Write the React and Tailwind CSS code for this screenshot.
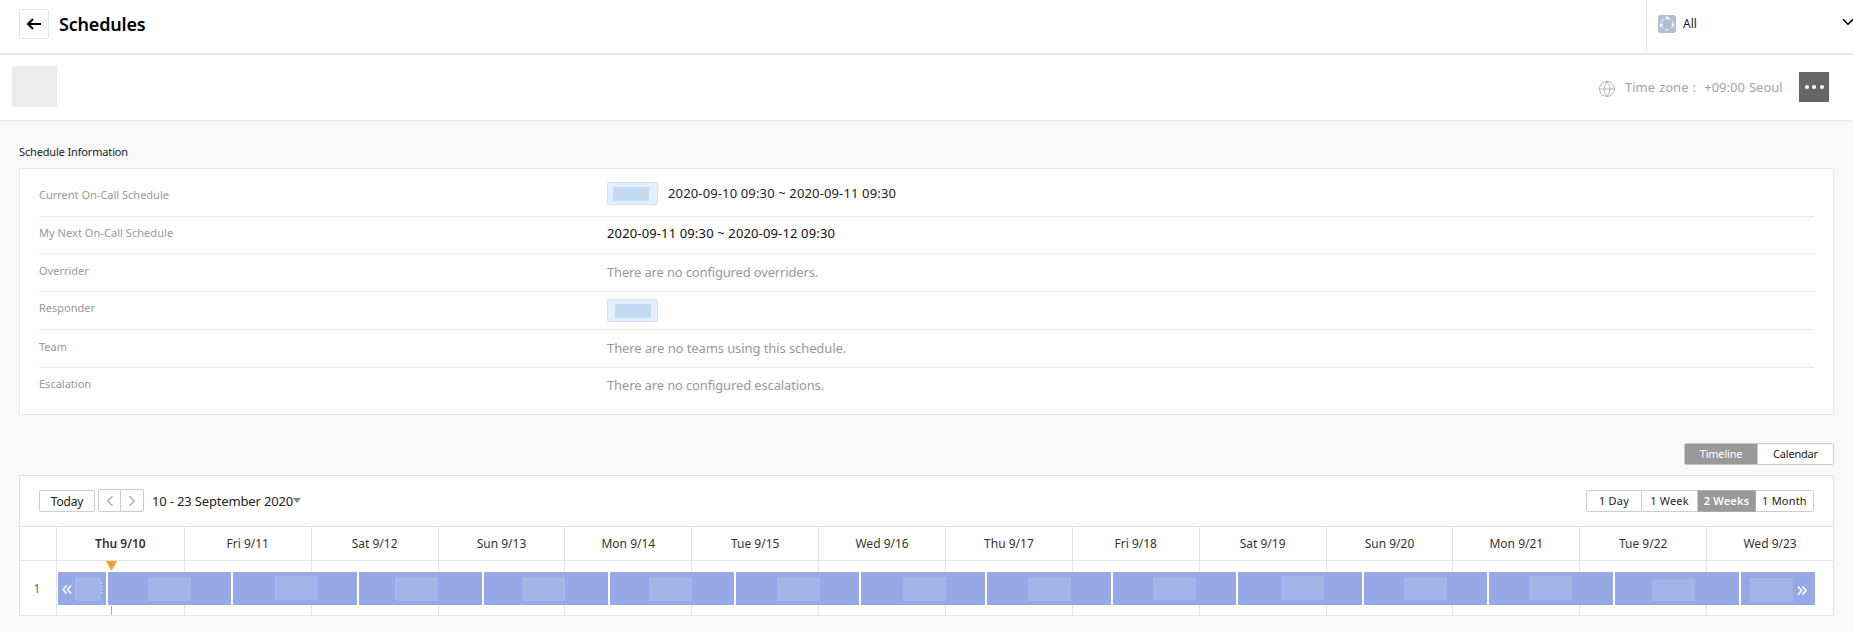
import React from "react";
import { ChevronDown, ChevronLeft, ChevronRight, Globe } from "lucide-react";

const days = ["Thu 9/10","Fri 9/11","Sat 9/12","Sun 9/13","Mon 9/14","Tue 9/15","Wed 9/16","Thu 9/17","Fri 9/18","Sat 9/19","Sun 9/20","Mon 9/21","Tue 9/22","Wed 9/23"];

const segs = [
  [58,106,75,101,577,601],
  [108,231,148,191,577,601],
  [233,357,275,318,576,600],
  [359,482,395,438,577,601],
  [484,608,522,565,577,601],
  [610,734,649,692,577,601],
  [736,859,777,820,577,601],
  [861,985,903,946,577,601],
  [987,1111,1028,1071,577,601],
  [1113,1236,1153,1196,577,600],
  [1238,1362,1281,1324,576,600],
  [1364,1487,1404,1447,577,600],
  [1489,1613,1529,1572,576,600],
  [1615,1739,1652,1695,579,601],
  [1741,1815,1750,1793,578,602],
];

function Row({ label, children, last }) {
  return (
    <div className={`flex ${last ? "h-[46px]" : "border-b border-[#ececec]"} mx-[19px]`}>
      <div className="w-[568px] shrink-0 text-[11px] text-[#999]">{label}</div>
      <div className="flex-1 text-[13px]">{children}</div>
    </div>
  );
}

function Badge({ inner }) {
  return (
    <div className="w-[51px] h-[23px] bg-[#e3f0fd] border border-[#cfe4fa] rounded-[2px] flex items-center">
      <div className={`${inner} w-[36px] h-[14px] bg-[#c5dbf4]`} />
    </div>
  );
}

export default function App() {
  return (
    <div className="w-[1853px] h-[632px] overflow-hidden bg-[#f9f9f9] text-[#222]" style={{ fontFamily: '"Noto Sans","Noto Sans CJK KR",sans-serif' }}>
      {/* top bar */}
      <header className="h-[55px] bg-white border-b-2 border-[#e9e9e9] flex items-center">
        <div className="flex items-center pb-[5px]">
          <button className="ml-[19px] w-[30px] h-[30px] border border-[#e6e6e6] rounded-[2px] flex items-center justify-center">
            <svg width="16" height="12" viewBox="0 0 16 12" fill="none" stroke="#000" strokeWidth="2">
              <path d="M15 6H2" />
              <path d="M7 1 2 6l5 5" />
            </svg>
          </button>
          <h1 className="ml-[10px] text-[18px] font-semibold text-black tracking-[-0.2px]">Schedules</h1>
        </div>
        <div className="ml-auto w-[207px] h-full border-l border-[#e8e8e8] flex items-center pl-[11px] pb-[5px] relative overflow-hidden">
          <svg width="18" height="18" viewBox="0 0 18 18">
            <rect width="18" height="18" rx="2" fill="#b1bfd2" />
            <circle cx="9" cy="9" r="6" fill="none" stroke="#fff" strokeWidth="1" strokeDasharray="4.5 2.2" />
            <circle cx="9" cy="3" r="1.5" fill="#fff" />
            <circle cx="3" cy="10" r="1.5" fill="#fff" />
            <circle cx="15" cy="10" r="1.5" fill="#fff" />
          </svg>
          <span className="ml-[7px] text-[12px] text-[#222]">All</span>
          <ChevronDown size={18} strokeWidth={2.2} className="absolute right-[-4px] top-[13px] text-black" />
        </div>
      </header>

      {/* sub bar */}
      <div className="h-[66px] bg-white border-b border-[#e8e8e8] flex items-center pl-[12px] pr-[24px]">
        <div className="w-[45px] h-[41px] bg-[#ececec] -mt-[2px]" />
        <Globe size={18} strokeWidth={1.1} className="ml-auto text-[#a8a8a8] mt-[2px]" />
        <span className="ml-[9px] w-[157px] text-[13px] text-[#a3a3a3] [word-spacing:0.7px] whitespace-pre mt-[1px]">Time zone :  +09:00 Seoul</span>
        <button className="ml-[17px] w-[30px] h-[30px] bg-[#666] flex items-center justify-center gap-[3.5px] -mt-[1px]">
          <span className="w-[4px] h-[4px] rounded-full bg-white" />
          <span className="w-[4px] h-[4px] rounded-full bg-white" />
          <span className="w-[4px] h-[4px] rounded-full bg-white" />
        </button>
      </div>

      <main className="px-[19px]">
        <div className="h-[47px] pt-[23px] text-[11px] leading-[16px] text-[#222] tracking-[-0.15px]">Schedule Information</div>

        {/* info card */}
        <section className="h-[247px] bg-white border border-[#e8e8e8]">
          <Row label={<div className="pt-[18px] leading-[16px]">Current On-Call Schedule</div>}>
            <div className="h-[47px] pt-[13px] flex items-start">
              <Badge inner="ml-[5px]" />
              <span className="ml-[10px] leading-[22px] text-[#222] tracking-[0.14px]">2020-09-10 09:30 ~ 2020-09-11 09:30</span>
            </div>
          </Row>
          <Row label={<div className="pt-[8px] leading-[16px] tracking-[0.05px]">My Next On-Call Schedule</div>}>
            <div className="h-[36px] pt-[5px] leading-[22px] text-[#111] tracking-[0.14px]">2020-09-11 09:30 ~ 2020-09-12 09:30</div>
          </Row>
          <Row label={<div className="pt-[9px] leading-[16px]">Overrider</div>}>
            <div className="h-[37px] pt-[7px] leading-[22px] text-[#999] tracking-[-0.16px]">There are no configured overriders.</div>
          </Row>
          <Row label={<div className="pt-[8px] leading-[16px]">Responder</div>}>
            <div className="h-[37px] pt-[7px]"><Badge inner="ml-[7px]" /></div>
          </Row>
          <Row label={<div className="pt-[9px] leading-[16px]">Team</div>}>
            <div className="h-[37px] pt-[7px] leading-[22px] text-[#999] tracking-[-0.09px]">There are no teams using this schedule.</div>
          </Row>
          <Row last label={<div className="pt-[8px] leading-[16px]">Escalation</div>}>
            <div className="pt-[6px] leading-[22px] text-[#999] tracking-[-0.14px]">There are no configured escalations.</div>
          </Row>
        </section>

        {/* view toggle */}
        <div className="mt-[28px] flex justify-end text-[11px] tracking-[-0.2px]">
          <button className="w-[74px] h-[22px] bg-[#999] border border-[#c8c8c8] text-white rounded-l-[2px]">Timeline</button>
          <button className="w-[76px] h-[22px] bg-white border border-l-0 border-[#ccc] text-[#222] rounded-r-[2px]">Calendar</button>
        </div>

        {/* timeline card */}
        <section className="mt-[10px] h-[141px] bg-white border border-[#e3e3e3]">
          <div className="h-[51px] border-b border-[#e3e3e3] flex items-start pl-[19px] pr-[19px] pt-[13px]">
            <button className="w-[56px] h-[22px] mt-[1px] pt-[2px] border border-[#ccc] rounded-[2px] text-[12px] text-[#222] tracking-[-0.2px]">Today</button>
            <button className="ml-[3px] w-[23px] h-[23px] border border-[#ccc] rounded-l-[2px] flex items-center justify-center">
              <ChevronLeft size={18} strokeWidth={1.6} className="text-[#aaa]" />
            </button>
            <button className="w-[23px] h-[23px] border border-l-0 border-[#ccc] rounded-r-[2px] flex items-center justify-center">
              <ChevronRight size={18} strokeWidth={1.6} className="text-[#aaa]" />
            </button>
            <span className="ml-[8px] mt-[1px] text-[13px] leading-[22px] text-[#222] tracking-[-0.16px]">10 - 23 September 2020</span>
            <svg width="8" height="5" viewBox="0 0 8 5" className="mt-[9px]"><path d="M0 0h8L4 5z" fill="#888" /></svg>
            <div className="ml-auto flex text-[11px] tracking-[0.2px] mt-[1px]">
              <button className="w-[56px] h-[22px] border border-[#ccc] rounded-l-[2px] text-[#222]">1 Day</button>
              <button className="w-[56px] h-[22px] border border-l-0 border-[#ccc] text-[#222]">1 Week</button>
              <button className="w-[58px] h-[22px] bg-[#999] border border-l-0 border-[#aaa] text-white font-semibold">2 Weeks</button>
              <button className="w-[58px] h-[22px] border border-l-0 border-[#ccc] rounded-r-[2px] text-[#222]">1 Month</button>
            </div>
          </div>

          <div className="flex h-[34px] border-b border-[#e3e3e3]">
            <div className="w-[37px] shrink-0 border-r border-[#e3e3e3]" />
            <div className="flex-1 grid grid-cols-[repeat(14,1fr)]">
              {days.map((d, i) => (
                <div key={d} className={`flex items-center justify-center text-[12px] text-[#333] ${i > 0 ? "border-l border-[#e3e3e3]" : ""} ${i === 0 ? "font-semibold text-[#222]" : ""}`}>{d}</div>
              ))}
            </div>
          </div>

          <div className="flex h-[54px] relative">
            <div className="w-[37px] shrink-0 border-r border-[#e3e3e3] flex items-center justify-center text-[12px] text-[#666] pt-[2px] pr-[2px]">1</div>
            <div className="flex-1 grid grid-cols-[repeat(14,1fr)]">
              {days.map((d, i) => (
                <div key={d} className={i > 0 ? "border-l border-[#e3e3e3]" : ""} />
              ))}
            </div>

            {/* bars */}
            <div className="absolute left-[38px] top-[11px] h-[33px] flex">
              {segs.map(([x0, x1, bx0, bx1, by0, by1], i) => (
                <div key={x0} className="relative h-full bg-[#96a9e6] shrink-0" style={{ width: x1 - x0, marginLeft: i === 0 ? 0 : x0 - segs[i - 1][1] }}>
                  <div className="absolute bg-[#a2b4e8]" style={{ left: bx0 - x0, width: bx1 - bx0, top: by0 - 572, height: by1 - by0 }} />
                  {i === 0 && (
                    <svg width="10" height="9" viewBox="0 0 10 9" fill="none" stroke="#fff" strokeWidth="1.6" className="absolute left-[4px] top-[13px]">
                      <path d="M4.5 .5 1 4.5l3.5 4M9 .5 5.5 4.5 9 8.5" />
                    </svg>
                  )}
                  {i === 0 && (
                    <span className="absolute left-[43px] top-[11px] flex flex-col gap-[2px]">
                      <span className="w-[1px] h-[1px] bg-white" />
                      <span className="w-[1px] h-[1px] bg-white" />
                      <span className="w-[1px] h-[1px] bg-white" />
                      <span className="w-[1px] h-[1px] bg-white" />
                    </span>
                  )}
                  {i === 14 && (
                    <svg width="10" height="9" viewBox="0 0 10 9" fill="none" stroke="#fff" strokeWidth="1.6" className="absolute left-[56px] top-[14px]">
                      <path d="M1 .5 4.5 4.5 1 8.5M5.5 .5 9 4.5l-3.5 4" />
                    </svg>
                  )}
                </div>
              ))}
            </div>

            {/* now marker */}
            <svg width="12" height="10" viewBox="0 0 12 10" className="absolute left-[86px] top-[0px]"><path d="M0 0h11L5.5 10z" fill="#f5a22c" /></svg>
            <div className="absolute left-[91px] top-[45px] w-[1px] h-[9px] bg-[#f0a030]" />
          </div>
        </section>
      </main>
    </div>
  );
}
